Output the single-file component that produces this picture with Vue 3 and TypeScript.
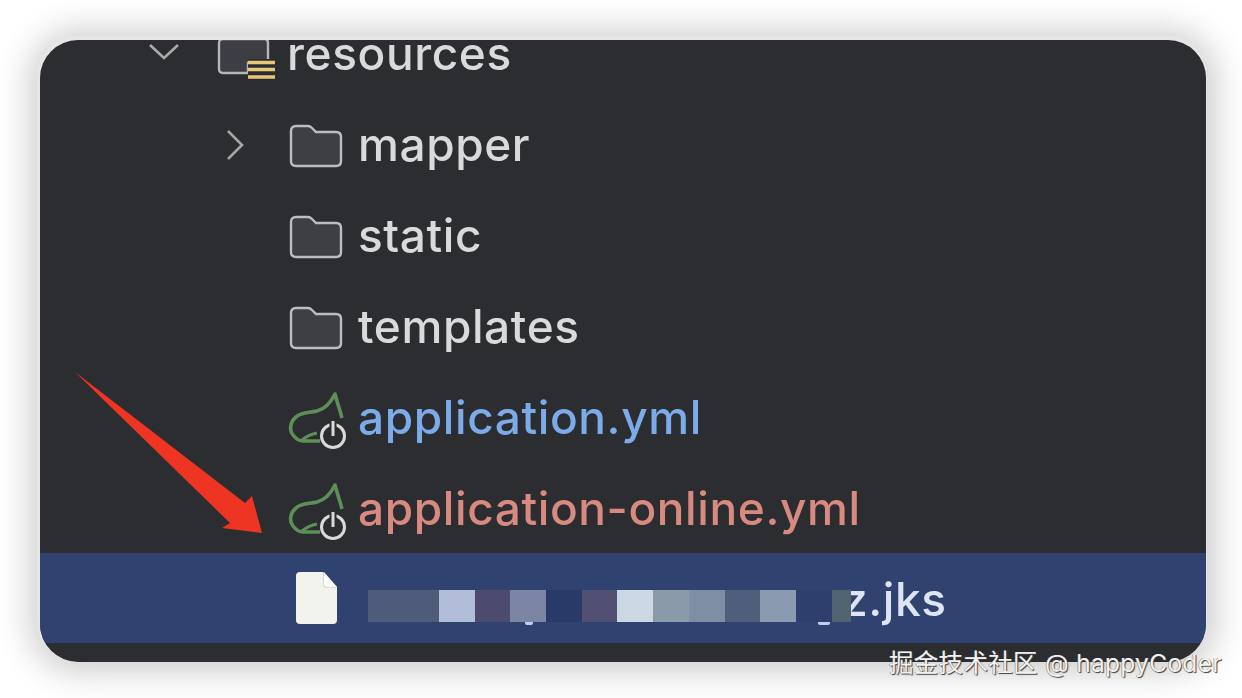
<script setup lang="ts">
interface Row {
  name: string
  kind: 'folder' | 'spring'
  tone?: string
  chevron?: boolean
}
const rows: Row[] = [
  { name: 'mapper', kind: 'folder', chevron: true },
  { name: 'static', kind: 'folder' },
  { name: 'templates', kind: 'folder' },
  { name: 'application.yml', kind: 'spring', tone: 'blue' },
  { name: 'application-online.yml', kind: 'spring', tone: 'red' },
]
const tiles: { w: number; c: string }[] = [
  { w: 71, c: '#4e5b79' },
  { w: 36, c: '#b1bdd9' },
  { w: 35, c: '#4d4a70' },
  { w: 36, c: '#7c86a4' },
  { w: 36, c: '#2a3a68' },
  { w: 35, c: '#524f74' },
  { w: 36, c: '#cbd8e4' },
  { w: 36, c: '#8b9aa8' },
  { w: 36, c: '#7e8ea4' },
  { w: 35, c: '#4f5e7a' },
  { w: 36, c: '#8a9ab0' },
  { w: 36, c: '#2e3e6d' },
  { w: 19, c: '#4f6470' },
]
</script>

<template>
  <div class="page">
    <div class="card">
      <div class="tree">
        <div class="row top">
          <svg class="chev down" width="32" height="20" viewBox="0 0 32 20">
            <path d="M2 3 L16 16 L30 3" fill="none" stroke="#a9abac" stroke-width="2.6" />
          </svg>
          <svg class="res-icon" width="60" height="60" viewBox="0 0 60 60">
            <path d="M3 18 Q3 14 7 14 H49 Q52 14 52 18 V38 H32 V48 H7 Q3 48 3 44 Z" fill="#3d3e43" stroke="#b5b6b8" stroke-width="2.4" />
            <path d="M32 34 H60 V55 H32 Z" fill="#2b2d30" />
            <path d="M32 37.5 H59 M32 44.5 H59 M32 52 H59" stroke="#e8c878" stroke-width="3.6" />
          </svg>
          <span class="name white">resources</span>
        </div>
        <div v-for="r in rows" :key="r.name" class="row">
          <svg v-if="r.chevron" class="chev right" width="20" height="32" viewBox="0 0 20 32">
            <path d="M3 2 L17 16 L3 30" fill="none" stroke="#a3a5a6" stroke-width="2.6" />
          </svg>
          <svg v-if="r.kind === 'folder'" class="icon" width="54" height="46" viewBox="0 0 54 46">
            <path d="M2 8 Q2 3 7 3 H19 Q21 3 23 5 L27 9 H47 Q52 9 52 14 V38 Q52 43 47 43 H7 Q2 43 2 38 Z" fill="#3e3f44" stroke="#bcbdbf" stroke-width="2.4" />
          </svg>
          <svg v-else class="icon spring" width="58" height="58" viewBox="0 0 58 58">
            <path d="M53 24 C51 16 48 8 46 0 C42 8 36 15 28 17 C20 19 12 18 7 23 C1 28 0 36 4 41 C7 45 10 47 14 47 H31" fill="none" stroke="#5f8f58" stroke-width="3.6" stroke-linejoin="round" />
            <path d="M13 46 C18 42 22 40 28 39" fill="none" stroke="#5f8f58" stroke-width="3" />
            <circle cx="44" cy="42" r="11.5" fill="none" stroke="#d8dcd8" stroke-width="3" />
            <path d="M44 26 V42" stroke="#2b2d30" stroke-width="7" />
            <path d="M44 27 V42" stroke="#d8dcd8" stroke-width="3" />
          </svg>
          <span class="name" :class="r.tone ?? 'white'">{{ r.name }}</span>
        </div>
        <div class="row selected">
          <svg class="file" width="44" height="54" viewBox="0 0 44 54">
            <path d="M5 1 H28 L42 16 V49 Q42 53 38 53 H5 Q1 53 1 49 V5 Q1 1 5 1 Z" fill="#f3f3ee" />
            <path d="M28 1 V13 Q28 17 32 17 H42 Z" fill="#d5dae6" />
            <path d="M29 1 L42 16 H33 Q29 16 29 12 Z" fill="#fbfbf8" />
          </svg>
          <div class="mosaic">
            <i v-for="(t, i) in tiles" :key="i" :style="{ width: t.w + 'px', background: t.c }"></i>
            <b class="speck one"></b>
            <b class="speck two"></b>
          </div>
          <span class="name jks">z.jks</span>
        </div>
      </div>
      <svg class="arrow" width="200" height="170" viewBox="0 0 200 170">
        <path d="M0 0 L170 131 L177 124 L187 161 L147 156 L155 151 Z" fill="#ee3524" />
      </svg>
    </div>
    <div class="mark">掘金技术社区 @ happyCoder</div>
  </div>
</template>

<style>
html, body { margin: 0; background: #fff; }
</style>

<style scoped>
.page {
  position: relative;
  width: 1242px;
  height: 698px;
  overflow: hidden;
  background: #fff;
  padding: 40px 36px 36px 40px;
  box-sizing: border-box;
  font-family: Inter, "Noto Sans CJK SC", sans-serif;
}
.card {
  position: relative;
  width: 1166px;
  height: 622px;
  background: #2b2d30;
  border-radius: 38px;
  overflow: hidden;
  box-shadow: -1px -2px 0 2px #e6e6e6, 0 0 34px 10px rgba(0, 0, 0, 0.2);
}
.tree {
  margin-top: -31px;
  filter: blur(0.7px);
}
.row {
  position: relative;
  height: 91px;
  display: flex;
  align-items: center;
  padding-left: 249px;
  box-sizing: border-box;
}
.row.top { padding-left: 176px; }
.chev.down { position: absolute; left: 108px; top: 33px; }
.chev.right { position: absolute; left: 185px; top: 29px; }
.res-icon { margin-right: 11px; flex: none; }
.icon { flex: none; margin-right: 15px; }
.icon.spring { margin-right: 11px; margin-top: 8px; overflow: visible; }
.name {
  font-size: 46px;
  line-height: 91px;
  white-space: nowrap;
  font-weight: 500;
  letter-spacing: 0.6px;
  position: relative;
  top: -1px;
}
.white { color: #d8dadc; }
.blue { color: #7cabea; }
.red { color: #d98a80; }
.selected {
  background: #2f4270;
  height: 90px;
  margin-top: -2px;
  padding-top: 4px;
  padding-left: 255px;
}
.file { flex: none; margin-top: -4px; }
.mosaic {
  position: relative;
  z-index: 1;
  display: flex;
  height: 32px;
  margin-left: 29px;
  margin-top: 12px;
  flex: none;
}
.mosaic i { display: block; height: 100%; }
.speck {
  position: absolute;
  top: 32px;
  height: 3px;
  background: #c4cfe6;
  border-radius: 0 0 2px 2px;
}
.speck.one { left: 157px; width: 8px; }
.speck.two { left: 450px; width: 12px; }
.jks { color: #dfe4f2; margin-left: -9px; }
.arrow {
  position: absolute;
  left: 35px;
  top: 332px;
  filter: blur(0.6px);
}
.mark {
  position: absolute;
  left: 889px;
  top: 646px;
  font-size: 24.5px;
  line-height: 34px;
  white-space: nowrap;
  color: #f2f2f2;
  letter-spacing: 0.3px;
  text-shadow: 1px 1px 1px #3f3f3f, -0.5px -0.5px 0.5px #777;
}
</style>
